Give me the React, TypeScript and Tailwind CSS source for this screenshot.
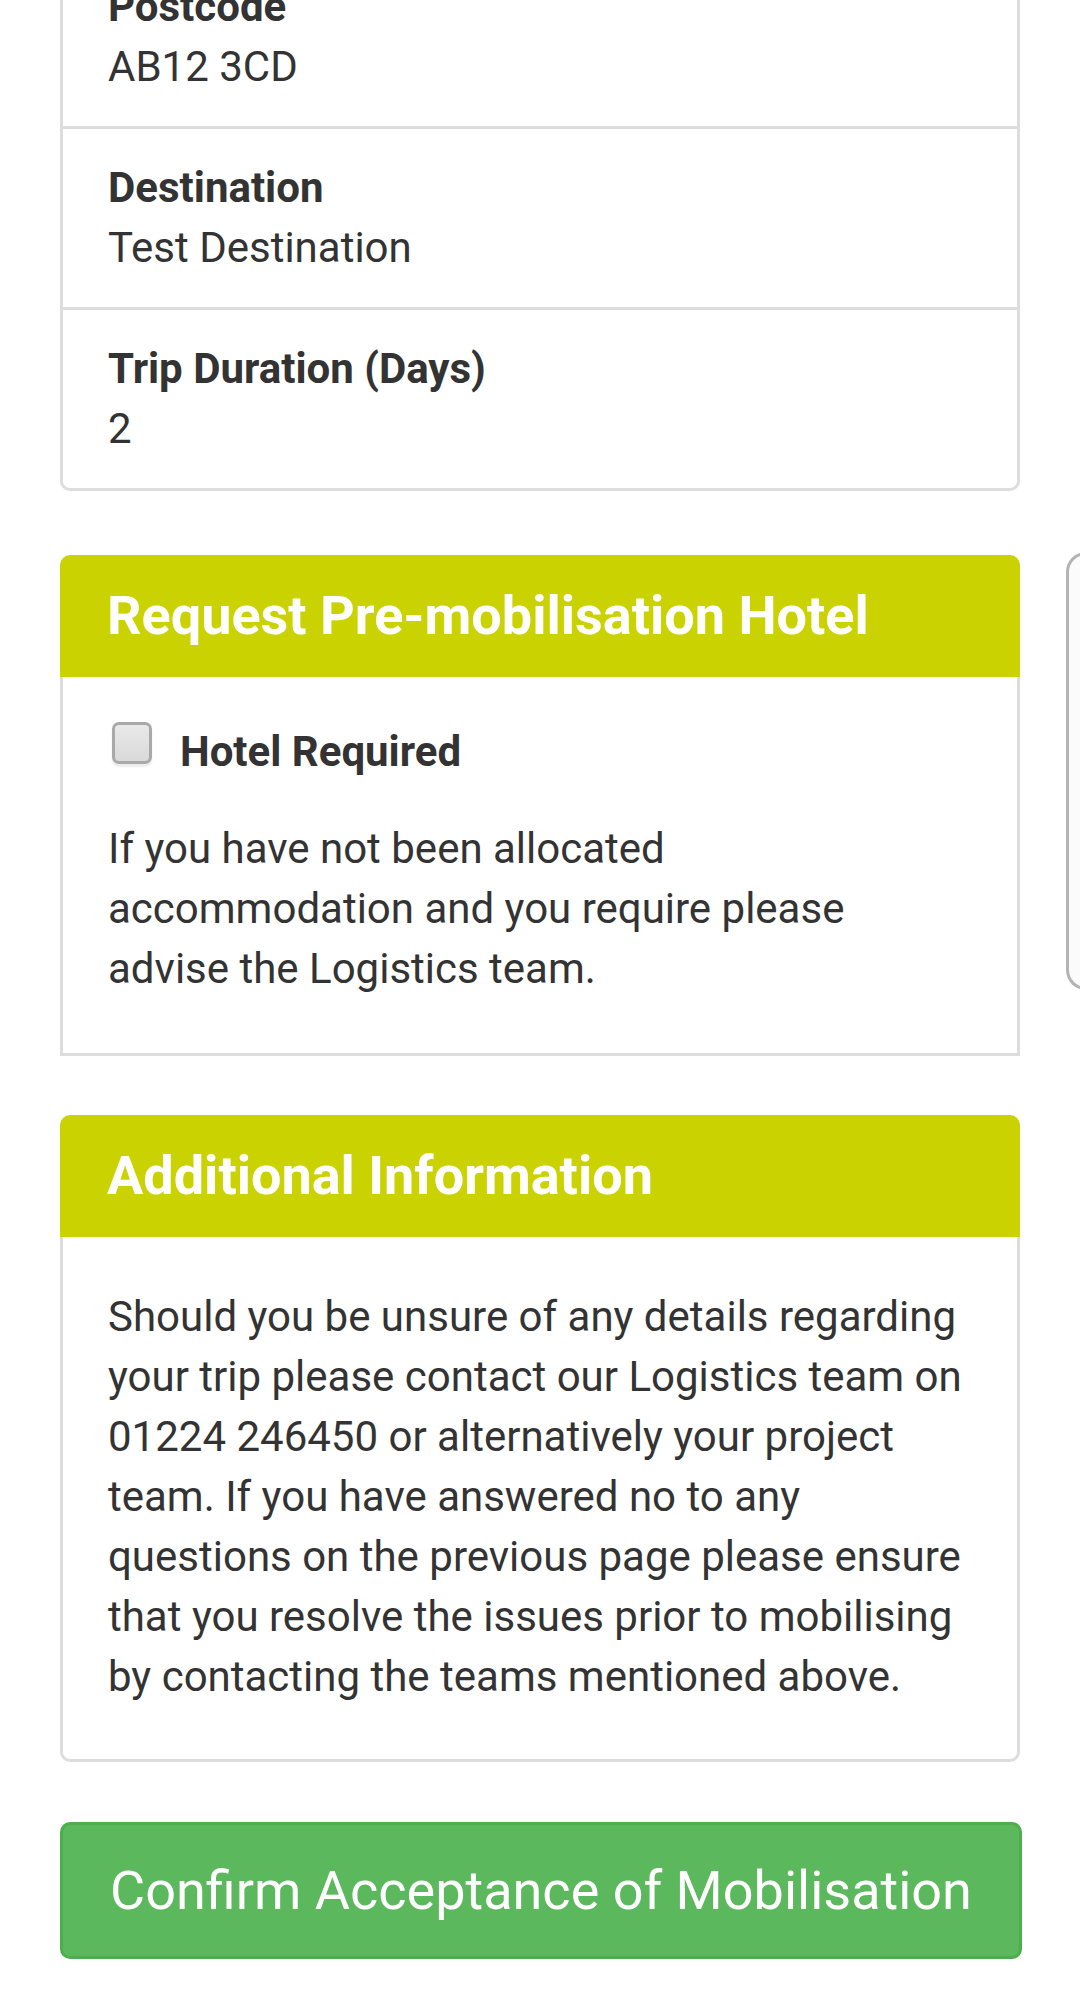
import React from 'react'

const details = [
  { label: 'Postcode', value: 'AB12 3CD' },
  { label: 'Destination', value: 'Test Destination' },
  { label: 'Trip Duration (Days)', value: '2' },
]

function PanelHeading({ title }: { title: string }) {
  return (
    <div className="h-[122px] bg-[#cbd201] rounded-t-[10px] pl-[47px] flex items-center">
      <h3 className="text-[54px] font-bold text-white leading-none">{title}</h3>
    </div>
  )
}

export default function App() {
  return (
    <div
      className="relative w-[1080px] h-[2004px] overflow-hidden bg-white text-[#333333]"
      style={{ fontFamily: 'Roboto, "Noto Sans", "Liberation Sans", sans-serif' }}
    >
      <div className="px-[60px]">
        {/* Trip details */}
        <div className="-mt-[55px] border-[3px] border-[#dddddd] rounded-[10px] bg-white">
          {details.map((d, i) => (
            <div
              key={d.label}
              className={`px-[45px] py-[29px] ${i > 0 ? 'border-t-[3px] border-[#dddddd]' : ''}`}
            >
              <div className="text-[42px] leading-[60px] font-bold">{d.label}</div>
              <div className="text-[42px] leading-[60px]">{d.value}</div>
            </div>
          ))}
        </div>

        {/* Hotel */}
        <div className="mt-[64px]">
          <PanelHeading title="Request Pre-mobilisation Hotel" />
          <div className="border-[3px] border-t-0 border-[#dddddd] px-[45px] pt-[45px] pb-[54px]">
            <label className="flex items-start pl-[4px]">
              <span className="w-[40px] h-[42px] rounded-[7px] border-[3px] border-[#a9a9a9] bg-gradient-to-b from-[#e9e9e9] to-[#d9d9d9] shadow-[0_3px_2px_rgba(0,0,0,0.08)] shrink-0" />
              <span className="ml-[28px] text-[42px] leading-[60px] font-bold">Hotel Required</span>
            </label>
            <p className="mt-[37px] max-w-[800px] text-[42px] leading-[60px]">
              If you have not been allocated accommodation and you require please advise the Logistics team.
            </p>
          </div>
        </div>

        {/* Additional information */}
        <div className="mt-[59px]">
          <PanelHeading title="Additional Information" />
          <div className="border-[3px] border-t-0 border-[#dddddd] rounded-b-[10px] px-[45px] pt-[50px] pb-[52px]">
            <p className="text-[42px] leading-[60px]">
              Should you be unsure of any details regarding your trip please contact our Logistics team on 01224
              246450 or alternatively your project team. If you have answered no to any questions on the previous
              page please ensure that you resolve the issues prior to mobilising by contacting the teams mentioned
              above.
            </p>
          </div>
        </div>

        <button className="mt-[60px] w-[962px] h-[137px] rounded-[10px] border-[3px] border-[#4cae4c] bg-[#5cb85c] text-white text-[54px] leading-none">
          Confirm Acceptance of Mobilisation
        </button>
      </div>

      {/* edge handle overlay */}
      <div className="absolute left-[1066px] top-[552px] w-[40px] h-[438px] rounded-l-[20px] border-[3px] border-r-0 border-[#b4b4b4] bg-[#fbfbfb]" />
    </div>
  )
}
